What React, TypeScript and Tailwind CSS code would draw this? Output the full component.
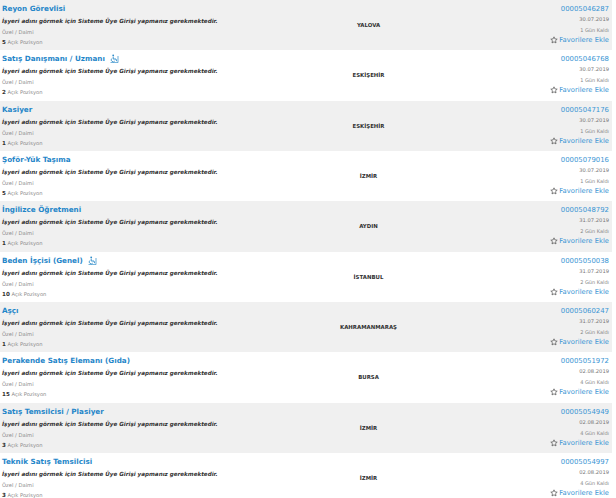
import React from "react";

const jobs = [
  { title: "Reyon Görevlisi", city: "YALOVA", id: "00005046287", date: "30.07.2019", left: "1 Gün Kaldı", count: 5, icon: false },
  { title: "Satış Danışmanı / Uzmanı", city: "ESKİŞEHİR", id: "00005046768", date: "30.07.2019", left: "1 Gün Kaldı", count: 2, icon: true },
  { title: "Kasiyer", city: "ESKİŞEHİR", id: "00005047176", date: "30.07.2019", left: "1 Gün Kaldı", count: 1, icon: false },
  { title: "Şoför-Yük Taşıma", city: "İZMİR", id: "00005079016", date: "30.07.2019", left: "1 Gün Kaldı", count: 5, icon: false },
  { title: "İngilizce Öğretmeni", city: "AYDIN", id: "00005048792", date: "31.07.2019", left: "2 Gün Kaldı", count: 1, icon: false },
  { title: "Beden İşçisi (Genel)", city: "İSTANBUL", id: "00005050038", date: "31.07.2019", left: "2 Gün Kaldı", count: 10, icon: true },
  { title: "Aşçı", city: "KAHRAMANMARAŞ", id: "00005060247", date: "31.07.2019", left: "2 Gün Kaldı", count: 1, icon: false },
  { title: "Perakende Satış Elemanı (Gıda)", city: "BURSA", id: "00005051972", date: "02.08.2019", left: "4 Gün Kaldı", count: 15, icon: false },
  { title: "Satış Temsilcisi / Plasiyer", city: "İZMİR", id: "00005054949", date: "02.08.2019", left: "4 Gün Kaldı", count: 3, icon: false },
  { title: "Teknik Satış Temsilcisi", city: "İZMİR", id: "00005054997", date: "02.08.2019", left: "4 Gün Kaldı", count: 3, icon: false },
];

// small accessibility mark shown next to some titles
function Wheelchair() {
  return (
    <svg width="9" height="9" viewBox="0 0 9 9" className="ml-[5px] inline-block">
      <circle cx="3.2" cy="1.3" r="0.9" fill="#2a8ac8" />
      <path d="M3.2 2.6 L3.2 5 L6 5 L6.6 7.2" stroke="#2a8ac8" strokeWidth="0.9" fill="none" />
      <path d="M1.6 4.6 A2 2 0 1 0 4.8 7" stroke="#2a8ac8" strokeWidth="0.8" fill="none" />
      <path d="M0.5 8.6 L8 8.6 M8 2 L8 8.6" stroke="#2a8ac8" strokeWidth="0.7" />
    </svg>
  );
}

function Star() {
  return (
    <svg width="8" height="8" viewBox="0 0 24 24" className="mr-[1px]">
      <path
        d="M12 2.5 L14.9 8.8 L21.6 9.5 L16.6 14.1 L18 20.8 L12 17.4 L6 20.8 L7.4 14.1 L2.4 9.5 L9.1 8.8 Z"
        fill="none"
        stroke="#555"
        strokeWidth="2.2"
        strokeLinejoin="round"
      />
    </svg>
  );
}

export default function App() {
  return (
    <div className="w-[612px] bg-white font-['DejaVu_Sans',Verdana,sans-serif]">
      {jobs.map((job, i) => (
        <div key={job.id} className={`flex h-[50.33px] ${i % 2 === 0 ? "bg-[#f0f0f0]" : "bg-white"}`}>
          <div className="w-[230px] pl-[2px] pt-[3px] flex flex-col whitespace-nowrap">
            <div className="flex items-center text-[7.2px] leading-[11px] font-bold text-[#1f86c9]">
              {job.title}
              {job.icon && <Wheelchair />}
            </div>
            <div className="mt-[2px] text-[5.6px] leading-[10px] font-bold italic text-[#333]">
              İşyeri adını görmek için Sisteme Üye Girişi yapmanız gerekmektedir.
            </div>
            <div className="mt-[1px] text-[5.2px] leading-[10px] text-[#8a8a8a]">Özel / Daimi</div>
            <div className="text-[5.2px] leading-[10px] text-[#8a8a8a]">
              <span className="font-bold text-[#333] text-[5.6px]">{job.count}</span> Açık Pozisyon
            </div>
          </div>
          <div className="flex-1 flex items-center justify-center text-[5.4px] font-bold text-[#333]">
            {job.city}
          </div>
          <div className="w-[105px] pr-[3px] pt-[4px] flex flex-col items-end whitespace-nowrap">
            <div className="text-[6.9px] leading-[10px] text-[#3a95d4]">{job.id}</div>
            <div className="text-[5.2px] leading-[10px] text-[#777]">{job.date}</div>
            <div className="mt-[1px] text-[5px] leading-[10px] text-[#888]">{job.left}</div>
            <div className="flex items-center text-[6.8px] leading-[10px] text-[#3a95d4]">
              <Star />
              Favorilere Ekle
            </div>
          </div>
        </div>
      ))}
    </div>
  );
}
